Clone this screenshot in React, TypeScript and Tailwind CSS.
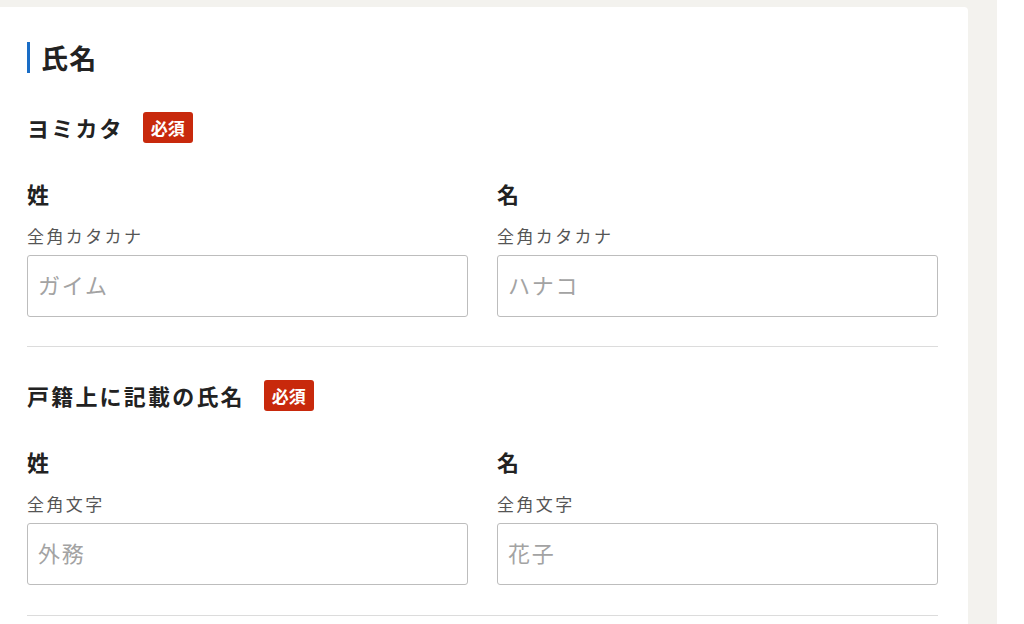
import React from "react";

const font = { fontFamily: '"Noto Sans CJK JP", "Noto Sans", sans-serif' };

function Badge() {
  return (
    <span className="ml-[19px] inline-flex h-[31px] w-[50px] items-center justify-center rounded-[3px] bg-[#c8290c] text-[17px] font-bold leading-none text-white">
      必須
    </span>
  );
}

function Field({ label, hint, placeholder }: { label: string; hint: string; placeholder: string }) {
  return (
    <div className="flex flex-col">
      <div className="text-[22px] font-bold leading-[26px] text-[#222]">{label}</div>
      <div className="mt-[17px] text-[17px] leading-[25px] tracking-[0.14em] text-[#555]">{hint}</div>
      <input
        readOnly
        placeholder={placeholder}
        className="mt-[7px] h-[62px] w-full rounded-[3px] border border-[#bdbdbd] bg-white pb-[4px] pl-[10px] text-[22px] tracking-[0.08em] text-[#222] outline-none placeholder:text-[#a3a3a3]"
        style={font}
      />
    </div>
  );
}

function Section({ title, hint, ph1, ph2, first }: { title: string; hint: string; ph1: string; ph2: string; first?: boolean }) {
  return (
    <div className={first ? "mt-[39px]" : "mt-[33px]"}>
      <div className="flex h-[31px] items-center">
        <span className="text-[22px] font-bold leading-[31px] tracking-[0.1em] text-[#222]">{title}</span>
        <Badge />
      </div>
      <div className="mt-[37px] grid grid-cols-2 gap-x-[29px]">
        <Field label="姓" hint={hint} placeholder={ph1} />
        <Field label="名" hint={hint} placeholder={ph2} />
      </div>
      <div className={first ? "mt-[29px] border-t border-[#dcdcdc]" : "mt-[30px] border-t border-[#dcdcdc]"} />
    </div>
  );
}

export default function App() {
  return (
    <div className="flex h-[624px] w-[1024px] overflow-hidden bg-white" style={font}>
      <div className="h-full w-[997px] bg-[#f3f2ee] pt-[7px]">
        <div className="h-full w-[968px] rounded-tr-[4px] bg-white pl-[27px] pr-[30px] pt-[35px]">
          <div className="h-[31px] border-l-[3px] border-[#1a6dc6] pl-[11px] text-[27px] font-bold leading-[31px] tracking-[0.05em] text-[#222]">
            氏名
          </div>
          <Section first title="ヨミカタ" hint="全角カタカナ" ph1="ガイム" ph2="ハナコ" />
          <Section title="戸籍上に記載の氏名" hint="全角文字" ph1="外務" ph2="花子" />
        </div>
      </div>
      <div className="h-full flex-1 bg-white" />
    </div>
  );
}
